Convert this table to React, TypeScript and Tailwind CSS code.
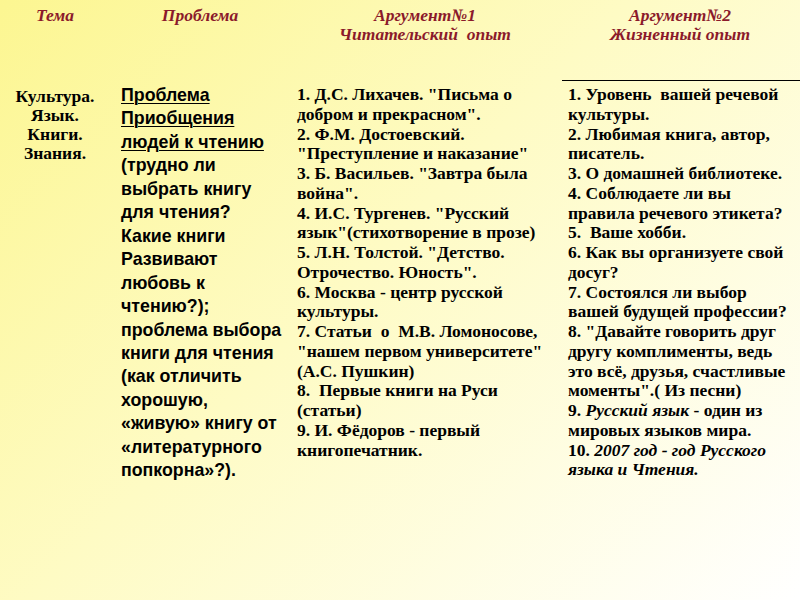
const serif = "font-['Liberation_Serif','Times_New_Roman',serif]";
const sans = "font-['Liberation_Sans',Arial,sans-serif]";

const col2Lines: { t: string; u?: boolean }[] = [
  { t: "Проблема", u: true },
  { t: "Приобщения", u: true },
  { t: "людей к чтению", u: true },
  { t: "(трудно ли" },
  { t: "выбрать книгу" },
  { t: "для чтения?" },
  { t: "Какие книги" },
  { t: "Развивают" },
  { t: "любовь к" },
  { t: "чтению?);" },
  { t: "проблема выбора" },
  { t: "книги для чтения" },
  { t: "(как отличить" },
  { t: "хорошую," },
  { t: "«живую» книгу от" },
  { t: "«литературного" },
  { t: "попкорна»?)." },
];

const col3Lines = [
  '1. Д.С. Лихачев. "Письма о',
  'добром и прекрасном".',
  "2. Ф.М. Достоевский.",
  '"Преступление и наказание"',
  '3. Б. Васильев. "Завтра была',
  'война".',
  '4. И.С. Тургенев. "Русский',
  'язык"(стихотворение в прозе)',
  '5. Л.Н. Толстой. "Детство.',
  'Отрочество. Юность".',
  "6. Москва - центр русской",
  "культуры.",
  "7. Статьи  о  М.В. Ломоносове,",
  '"нашем первом университете"',
  "(А.С. Пушкин)",
  "8.  Первые книги на Руси",
  "(статьи)",
  "9. И. Фёдоров - первый",
  "книгопечатник.",
];

const col4Lines: React.ReactNode[] = [
  "1. Уровень  вашей речевой",
  "культуры.",
  "2. Любимая книга, автор,",
  "писатель.",
  "3. О домашней библиотеке.",
  "4. Соблюдаете ли вы",
  "правила речевого этикета?",
  "5.  Ваше хобби.",
  "6. Как вы организуете свой",
  "досуг?",
  "7. Состоялся ли выбор",
  "вашей будущей профессии?",
  '8. "Давайте говорить друг',
  "другу комплименты, ведь",
  "это всё, друзья, счастливые",
  'моменты".( Из песни)',
  <>
    9. <i>Русский язык</i> - один из
  </>,
  "мировых языков мира.",
  <>
    10. <i>2007 год - год Русского</i>
  </>,
  <i>языка и Чтения.</i>,
];

function Head({ lines }: { lines: string[] }) {
  return (
    <div className={`${serif} text-center text-[17.5px] font-bold italic leading-[19px] text-[#8b1a2b]`}>
      {lines.map((l) => (
        <div key={l} className="whitespace-pre">
          {l}
        </div>
      ))}
    </div>
  );
}

export default function App() {
  return (
    <div className="h-[600px] w-[800px] overflow-hidden bg-[linear-gradient(135deg,#fcf691_0%,#fefbc4_45%,#ffffff_100%)]">
      <div className="grid grid-cols-[110px_180px_270px_240px] pt-[6px]">
        <Head lines={["Тема"]} />
        <Head lines={["Проблема"]} />
        <Head lines={["Аргумент№1", "Читательский  опыт"]} />
        <Head lines={["Аргумент№2", "Жизненный опыт"]} />
      </div>

      <div className="mt-[35px] grid grid-cols-[110px_180px_270px_240px]">
        <div className={`${serif} pt-[8px] text-center text-[17.5px] font-bold leading-[19px] text-black`}>
          <div>Культура.</div>
          <div>Язык.</div>
          <div>Книги.</div>
          <div>Знания.</div>
        </div>

        <div className={`${sans} pl-[11px] pt-[5px] text-[17.8px] font-bold leading-[23.45px] text-black`}>
          {col2Lines.map((l, i) => (
            <div key={i} className="whitespace-pre">
              <span className={l.u ? "underline decoration-1 underline-offset-2" : ""}>{l.t}</span>
            </div>
          ))}
        </div>

        <div className={`${serif} pl-[7px] pt-[6px] text-[17.5px] font-bold leading-[19.75px] text-black`}>
          {col3Lines.map((l, i) => (
            <div key={i} className="whitespace-pre">
              {l}
            </div>
          ))}
        </div>

        <div className="flex flex-col">
          <div className="ml-[2px] mt-[1px] h-px bg-black" />
          <div className={`${serif} pl-[8px] pt-[4px] text-[17.5px] font-bold leading-[19.75px] text-black`}>
            {col4Lines.map((l, i) => (
              <div key={i} className="whitespace-pre">
                {l}
              </div>
            ))}
          </div>
        </div>
      </div>
    </div>
  );
}
